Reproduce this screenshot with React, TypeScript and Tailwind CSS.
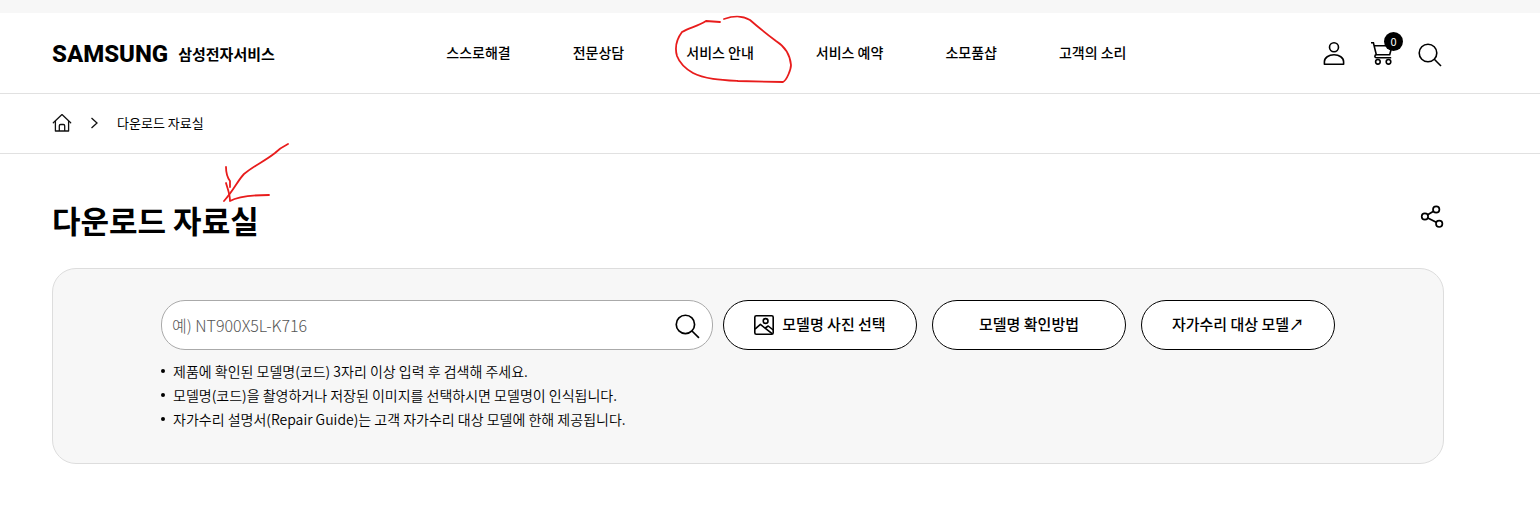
import type { ReactNode } from 'react';

const menu = ['스스로해결', '전문상담', '서비스 안내', '서비스 예약', '소모품샵', '고객의 소리'];

const notes = [
  '제품에 확인된 모델명(코드) 3자리 이상 입력 후 검색해 주세요.',
  '모델명(코드)을 촬영하거나 저장된 이미지를 선택하시면 모델명이 인식됩니다.',
  '자가수리 설명서(Repair Guide)는 고객 자가수리 대상 모델에 한해 제공됩니다.',
];

function UserIcon() {
  return (
    <svg width="24" height="26" viewBox="0 0 24 26" fill="none" stroke="#000" strokeWidth="1.6" aria-hidden="true">
      <circle cx="12" cy="7.2" r="4.5" />
      <path d="M2.4 24.2v-2.400c0-4.2 4.3-7 9.6-7s9.6 2.8 9.6 7v2.400z" strokeLinejoin="round" />
    </svg>
  );
}

function CartIcon() {
  return (
    <svg width="24" height="26" viewBox="0 0 24 26" fill="none" stroke="#000" strokeWidth="1.6" aria-hidden="true">
      <path d="M1 2.8h2.4l2.9 12h13.4l2.4-9H4.3" />
      <path d="M6.3 14.800c-1.800 0-2 3 .1 3h14.800" />
      <circle cx="7.900" cy="21.800" r="2.300" />
      <circle cx="18.500" cy="21.800" r="2.300" />
    </svg>
  );
}

function SearchIcon({ size }: { size: number }) {
  return (
    <svg width={size} height={size} viewBox="0 0 24 24" fill="none" stroke="#000" strokeWidth="1.6" aria-hidden="true">
      <circle cx="10" cy="10" r="8.800" />
      <path d="M16.300 16.300l6.700 6.700" />
    </svg>
  );
}

function HomeIcon() {
  return (
    <svg width="20" height="20" viewBox="0 0 20 20" fill="none" stroke="#111" strokeWidth="1.300" strokeLinejoin="round" aria-hidden="true">
      <path d="M1.300 9.700L10 1.600l8.700 8.100" strokeLinecap="round" />
      <path d="M3.400 8v10h13.200V8" />
      <path d="M7.300 18v-5.200q0-1.300 1.300-1.300h2.800q1.300 0 1.300 1.300V18" />
    </svg>
  );
}

function ShareIcon() {
  return (
    <svg width="24" height="24" viewBox="0 0 24 24" fill="none" stroke="#000" strokeWidth="1.700" aria-hidden="true">
      <circle cx="4.900" cy="11.500" r="3.200" />
      <circle cx="16.200" cy="4.500" r="3.200" />
      <circle cx="19.200" cy="18.800" r="3.200" />
      <path d="M7.700 9.800l5.800-3.600M7.800 13l8.500 4.300" />
    </svg>
  );
}

function PhotoIcon() {
  return (
    <svg width="20" height="20" viewBox="0 0 20 20" fill="none" stroke="#000" strokeWidth="1.600" strokeLinejoin="round" aria-hidden="true">
      <rect x="0.800" y="0.800" width="18.400" height="18.400" rx="1.500" />
      <circle cx="11.600" cy="6" r="2.400" />
      <path d="M1 14.200l5.400-4.800 12 9.400M11.300 13l2.900-2 5 4" />
    </svg>
  );
}

function PillButton({ children }: { children: ReactNode }) {
  return (
    <button
      type="button"
      className="flex h-[50px] w-[194px] shrink-0 items-center justify-center gap-2 whitespace-nowrap rounded-full border border-black bg-white pb-px text-[15px] font-medium"
    >
      {children}
    </button>
  );
}

export default function App() {
  return (
    <div className="relative bg-white font-['Noto_Sans_CJK_KR',sans-serif] text-black">
      <div className="h-[13px] bg-[#f7f7f7]" />

      <header className="flex h-[81px] items-center justify-between border-b border-[#e1e1e1] pr-[98px] pl-[52px]">
        <a href="#home" className="flex items-center gap-2.5 pt-0.5 whitespace-nowrap">
          <span className="font-[Roboto,sans-serif] text-2xl font-extrabold">SAMSUNG</span>
          <span className="text-[15px] font-bold">삼성전자서비스</span>
        </a>
        <nav className="flex items-center gap-[62px] pb-0.5 whitespace-nowrap text-sm font-medium">
          {menu.map((item) => (
            <a key={item} href="#menu">
              {item}
            </a>
          ))}
        </nav>
        <div className="flex items-center gap-6 pl-6">
          <button type="button" aria-label="로그인">
            <UserIcon />
          </button>
          <button type="button" aria-label="장바구니" className="relative">
            <CartIcon />
            <span className="absolute -top-2 left-3.5 flex size-[19px] items-center justify-center rounded-full bg-black text-[11px] text-white">
              0
            </span>
          </button>
          <button type="button" aria-label="검색" className="pt-1">
            <SearchIcon size={24} />
          </button>
        </div>
      </header>

      <nav aria-label="현재 위치" className="flex h-[60px] items-center border-b border-[#e1e1e1] pb-0.5 pl-[52px] text-[13px]">
        <a href="#home" aria-label="홈">
          <HomeIcon />
        </a>
        <svg className="mx-[18px]" width="9" height="12" viewBox="0 0 9 12" fill="none" stroke="#111" strokeWidth="1.300" aria-hidden="true">
          <path d="M1.500 1l5.500 5-5.500 5" />
        </svg>
        <span>다운로드 자료실</span>
      </nav>

      <main className="pr-24 pl-[52px]">
        <div className="flex h-[114px] items-start justify-between pt-[42px]">
          <h1 className="text-[31px] leading-[48px] font-bold">다운로드 자료실</h1>
          <button type="button" aria-label="공유하기" className="pt-[9px]">
            <ShareIcon />
          </button>
        </div>

        <section className="rounded-3xl border border-[#dddddd] bg-[#f7f7f7] px-[108px] pt-[31px] pb-8">
          <div className="flex items-center gap-[15px]">
            <form className="-mr-[5px] flex h-[50px] min-w-0 grow items-center rounded-3xl border border-[#aaaaaa] bg-white pr-3 pl-2.5">
              <input
                type="text"
                aria-label="모델명"
                placeholder="예) NT900X5L-K716"
                className="min-w-0 grow text-base font-light outline-none placeholder:text-[#555555]"
              />
              <button type="button" aria-label="검색" className="pt-0.5">
                <SearchIcon size={25} />
              </button>
            </form>
            <PillButton>
              <PhotoIcon />
              모델명 사진 선택
            </PillButton>
            <PillButton>모델명 확인방법</PillButton>
            <PillButton>자가수리 대상 모델↗</PillButton>
          </div>
          <ul className="mt-[9px] text-sm leading-6 font-[350]">
            {notes.map((note) => (
              <li key={note} className="flex items-center gap-2">
                <span className="size-1 rounded-full bg-black" />
                {note}
              </li>
            ))}
          </ul>
        </section>
      </main>

      <svg
        className="pointer-events-none absolute top-0 left-0"
        width="820"
        height="220"
        viewBox="0 0 820 220"
        fill="none"
        stroke="#e81c1c"
        strokeWidth="1.800"
        strokeLinecap="round"
        strokeLinejoin="round"
        aria-hidden="true"
      >
        <path d="M720 22L706 21C698 26 689 28 682 32C676 40 675 49 677 56C680 64 686 69 693 73C704 79 722 80 738 81L783 82C787 80 791 69 791 65C790 54 784 46 776 41C768 35 758 27 750 20C743 16 736 15 724 19" />
        <path d="M288 144C284 146 280 148 275 153C265 161 255 165 244 174C238 180 234 190 224 201" />
        <path d="M226 167C226 174 227 177 230 181V187M226 183C228 190 230 194 230 201C237 197 249 195 269 195" />
      </svg>
    </div>
  );
}
